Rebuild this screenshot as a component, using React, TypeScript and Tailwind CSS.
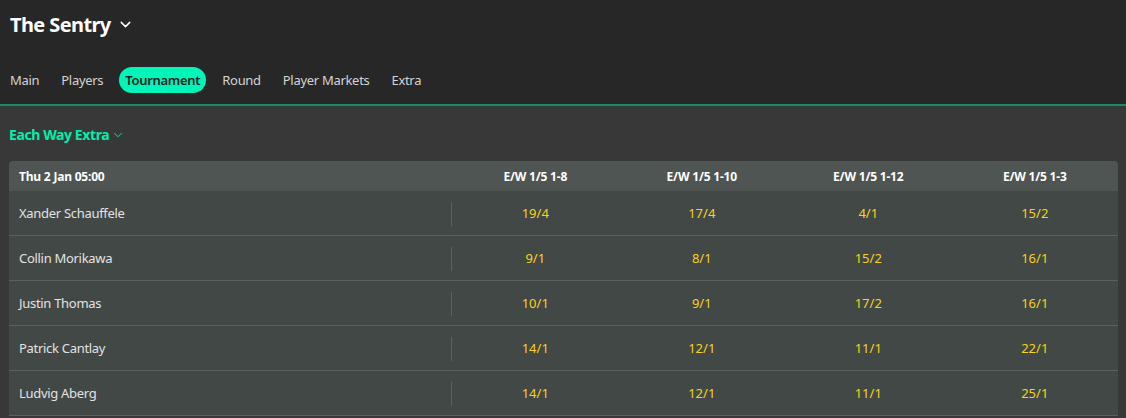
import { ChevronDown } from "lucide-react";

const TABS = ["Main", "Players", "Tournament", "Round", "Player Markets", "Extra"];
const COLUMNS = ["E/W 1/5 1-8", "E/W 1/5 1-10", "E/W 1/5 1-12", "E/W 1/5 1-3"];

const RUNNERS: { name: string; odds: string[] }[] = [
  { name: "Xander Schauffele", odds: ["19/4", "17/4", "4/1", "15/2"] },
  { name: "Collin Morikawa", odds: ["9/1", "8/1", "15/2", "16/1"] },
  { name: "Justin Thomas", odds: ["10/1", "9/1", "17/2", "16/1"] },
  { name: "Patrick Cantlay", odds: ["14/1", "12/1", "11/1", "22/1"] },
  { name: "Ludvig Aberg", odds: ["14/1", "12/1", "11/1", "25/1"] },
];

export default function App() {
  return (
    <div className="min-h-[418px] bg-[#383838] font-['Noto_Sans',sans-serif]">
      <header className="border-b-2 border-[#1b8a62] bg-[#272727] px-[10px]">
        <div className="flex h-[52px] items-center gap-[6px] pb-[3px]">
          <h1 className="text-[20px] font-bold leading-none tracking-[-0.6px] text-white">The Sentry</h1>
          <ChevronDown size={17} strokeWidth={2} className="text-white" />
        </div>
        <nav className="-ml-[6px] flex h-[52px] items-start gap-[10px] pt-[15px]">
          {TABS.map((tab) => (
            <button
              key={tab}
              className={`h-[26px] rounded-full px-[6px] text-[13px] leading-none tracking-[-0.3px] ${
                tab === "Tournament"
                  ? "bg-[#00f5b8] font-semibold text-[#1d1d1d]"
                  : "text-[#d4d4d4]"
              }`}
            >
              {tab}
            </button>
          ))}
        </nav>
      </header>

      <div className="px-[9px] pt-[21px]">
        <div className="flex items-center gap-[2px]">
          <span className="text-[14px] font-bold leading-none tracking-[-0.4px] text-[#00f0aa]">Each Way Extra</span>
          <ChevronDown size={14} strokeWidth={1.6} className="mt-[1px] text-[#00f0aa]" />
        </div>

        <div className="mt-[19px] w-[1109px] overflow-hidden rounded-t-[4px]">
          <div className="flex h-[30px] items-center bg-[#4f5552] pt-[2px] text-[12px] font-bold tracking-[-0.2px] text-white">
            <div className="w-[443px] pl-[10px]">Thu 2 Jan 05:00</div>
            {COLUMNS.map((c) => (
              <div key={c} className="flex-1 text-center">
                {c}
              </div>
            ))}
          </div>
          {RUNNERS.map((r) => (
            <div key={r.name} className="flex h-[45px] items-center border-b border-[#59605d] bg-[#424846] pt-[2px]">
              <div className="flex h-full w-[443px] items-center justify-between pl-[10px]">
                <span className="text-[13px] tracking-[-0.3px] text-[#e2e2e2]">{r.name}</span>
                <span className="h-[24px] w-px bg-[#5c625f]" />
              </div>
              {r.odds.map((o, i) => (
                <div key={i} className="flex-1 text-center text-[13px] text-[#f7d21a]">
                  {o}
                </div>
              ))}
            </div>
          ))}
        </div>
      </div>
    </div>
  );
}
